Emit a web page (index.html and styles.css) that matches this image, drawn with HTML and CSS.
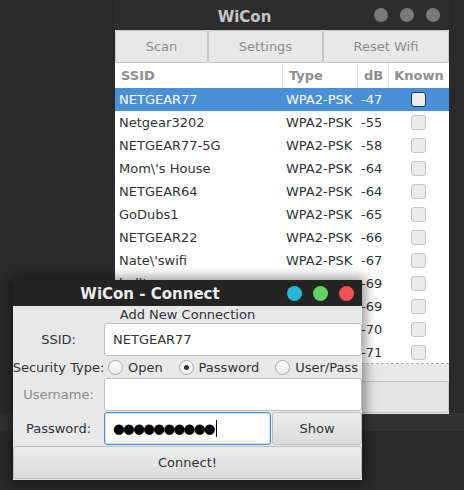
FILE: index.html
```html
<!DOCTYPE html>
<html>
<head>
<meta charset="utf-8">
<title>WiCon</title>
<link rel="stylesheet" href="styles.css">
</head>
<body>
<div class="win main">
  <div class="titlebar">
    <div class="title">WiCon</div>
    <div class="dots"><span></span><span></span><span></span></div>
  </div>
  <div class="toolbar">
    <div class="tb">Scan</div>
    <div class="tb">Settings</div>
    <div class="tb">Reset Wifi</div>
  </div>
  <div class="table">
    <div class="tr thead"><div>SSID</div><div>Type</div><div>dB</div><div class="known">Known</div></div>
    <div class="tr sel"><div>NETGEAR77</div><div>WPA2-PSK</div><div>-47</div><div class="known"><span class="cb"></span></div></div>
    <div class="tr"><div>Netgear3202</div><div>WPA2-PSK</div><div>-55</div><div class="known"><span class="cb"></span></div></div>
    <div class="tr"><div>NETGEAR77-5G</div><div>WPA2-PSK</div><div>-58</div><div class="known"><span class="cb"></span></div></div>
    <div class="tr"><div>Mom\'s House</div><div>WPA2-PSK</div><div>-64</div><div class="known"><span class="cb"></span></div></div>
    <div class="tr"><div>NETGEAR64</div><div>WPA2-PSK</div><div>-64</div><div class="known"><span class="cb"></span></div></div>
    <div class="tr"><div>GoDubs1</div><div>WPA2-PSK</div><div>-65</div><div class="known"><span class="cb"></span></div></div>
    <div class="tr"><div>NETGEAR22</div><div>WPA2-PSK</div><div>-66</div><div class="known"><span class="cb"></span></div></div>
    <div class="tr"><div>Nate\'swifi</div><div>WPA2-PSK</div><div>-67</div><div class="known"><span class="cb"></span></div></div>
    <div class="tr"><div>bellt</div><div></div><div>-69</div><div class="known"><span class="cb"></span></div></div>
    <div class="tr"><div></div><div></div><div>-69</div><div class="known"><span class="cb"></span></div></div>
    <div class="tr"><div></div><div></div><div>-70</div><div class="known"><span class="cb"></span></div></div>
    <div class="tr"><div></div><div></div><div>-71</div><div class="known"><span class="cb"></span></div></div>
  </div>
  <div class="foot"><div class="fbtn"></div></div>
</div>

<div class="win dlg">
  <div class="titlebar dtitlebar">
    <div class="title dtitle">WiCon - Connect</div>
    <div class="dots ddots"><span class="c1"></span><span class="c2"></span><span class="c3"></span></div>
  </div>
  <div class="form">
    <div class="caption">Add New Connection</div>
    <div class="lbl">SSID:</div>
    <div class="inp">NETGEAR77</div>
    <div class="lbl nowrap">Security Type:</div>
    <div class="radios">
      <div class="radio"><span class="rc"></span>Open</div>
      <div class="radio"><span class="rc on"></span>Password</div>
      <div class="radio"><span class="rc"></span>User/Pass</div>
    </div>
    <div class="lbl dis">Username:</div>
    <div class="inp"></div>
    <div class="lbl gap1">Password:</div>
    <div class="pw gap1">
      <div class="inp focus"><span class="mask">●●●●●●●●●●</span><span class="caret"></span></div>
      <div class="btn show">Show</div>
    </div>
    <div class="btn connect">Connect!</div>
  </div>
</div>
</body>
</html>
```

FILE: styles.css
```css
html, body {
  margin: 0;
  padding: 0;
}
body {
  width: 464px;
  height: 490px;
  overflow: hidden;
  position: relative;
  background: linear-gradient(#2a2a2a 0, #2a2a2a 413px, #323232 413px, #323232 431px, #2a2a2a 431px);
  font-family: "DejaVu Sans", sans-serif;
  font-size: 13px;
  color: #2e3436;
}
.win {
  position: absolute;
  display: flex;
  flex-direction: column;
  box-sizing: border-box;
}
.main {
  left: 115px;
  top: 0;
  width: 334px;
  height: 414px;
  background: #e8e8e8;
}
.titlebar {
  height: 30px;
  flex: none;
  display: flex;
  align-items: center;
  background: #2d2d2d;
  padding-right: 9px;
}
.title {
  flex: 1;
  text-align: center;
  font-weight: bold;
  font-size: 15px;
  color: #c6c6c6;
  padding-top: 3px;
}
.dots {
  display: flex;
  gap: 12px;
}
.dots span {
  width: 14px;
  height: 14px;
  border-radius: 50%;
  background: #797979;
}
.toolbar {
  display: grid;
  grid-template-columns: 93px 115px 1fr;
  height: 33px;
  flex: none;
}
.tb {
  border: 1px solid #c5c5c5;
  border-radius: 3px;
  background: #e8e8e8;
  color: #8c8c8c;
  display: flex;
  align-items: center;
  justify-content: center;
}
.table {
  height: 300px;
  flex: none;
  overflow: hidden;
  background: #fff;
  border-bottom: 1px dashed #b5b5b5;
}
.tr {
  display: grid;
  grid-template-columns: 167px 75px 31px 1fr;
  height: 23px;
  align-items: center;
}
.tr > div {
  padding-left: 4px;
  white-space: nowrap;
  overflow: hidden;
}
.thead {
  height: 25px;
  align-items: stretch;
  font-weight: bold;
  color: #8e8e8e;
}
.thead > div {
  display: flex;
  align-items: center;
  padding-left: 6px;
}
.thead > div + div {
  border-left: 1px solid #e4e4e4;
}
.tr > .known {
  padding-left: 0;
  display: flex;
  justify-content: center;
  align-items: center;
}
.thead > .known {
  padding-left: 0;
}
.sel {
  background: #4a90d9;
  color: #fff;
}
.cb {
  width: 15px;
  height: 15px;
  box-sizing: border-box;
  border: 1px solid #c4c4c4;
  border-radius: 3px;
  background: #ebebeb;
}
.sel .cb {
  border-color: #1f3450;
  background: #ededed;
}
.foot {
  flex: 1;
  padding-top: 17px;
}
.fbtn {
  height: 32px;
  box-sizing: border-box;
  border: 1px solid #c2c2c2;
  border-radius: 3px;
  background: #e6e6e6;
}

/* dialog */
.dlg {
  left: 13px;
  top: 280px;
  width: 349px;
  height: 200px;
  background: #e8e8e8;
  box-shadow: 0 1px 12px 3px rgba(0, 0, 0, 0.45);
}
.dtitlebar {
  height: 26px;
  background: #242424;
  padding-right: 8px;
}
.dtitle {
  color: #ececec;
  padding-top: 1px;
}
.ddots {
  gap: 11px;
}
.ddots span {
  width: 15px;
  height: 15px;
}
.ddots .c1 { background: #26b7d2; }
.ddots .c2 { background: #5fd364; }
.ddots .c3 { background: #f25252; }
.form {
  display: grid;
  grid-template-columns: 91px 1fr;
}
.caption {
  grid-column: 1 / -1;
  height: 17px;
  line-height: 17px;
  text-align: center;
}
.lbl {
  display: flex;
  align-items: center;
  justify-content: center;
  white-space: nowrap;
}
.dis {
  color: #8b8b8b;
}
.inp {
  height: 33px;
  box-sizing: border-box;
  background: #fff;
  border: 1px solid #bdbdbd;
  border-radius: 3px;
  padding-left: 8px;
  display: flex;
  align-items: center;
}
.radios {
  height: 22px;
  display: flex;
  justify-content: space-between;
  align-items: center;
  padding: 0 4px;
}
.radio {
  display: flex;
  align-items: center;
  gap: 5px;
}
.rc {
  width: 15px;
  height: 15px;
  box-sizing: border-box;
  border: 1px solid #a8a8a8;
  border-radius: 50%;
  background: linear-gradient(#ffffff, #ececec);
  display: flex;
  align-items: center;
  justify-content: center;
}
.rc.on::after {
  content: "";
  width: 5px;
  height: 5px;
  border-radius: 50%;
  background: #2e3436;
}
.gap1 {
  margin-top: 1px;
}
.pw {
  display: flex;
  gap: 1px;
}
.inp.focus {
  width: 167px;
  flex: none;
  border-color: #4a90d9;
  box-shadow: inset 0 0 0 1px rgba(74, 144, 217, 0.25);
}
.mask {
  font-size: 13.5px;
  color: #000;
  letter-spacing: -1.7px;
  line-height: 1;
}
.caret {
  width: 1px;
  height: 17px;
  background: #000;
  margin-left: 2px;
}
.btn {
  height: 33px;
  box-sizing: border-box;
  border: 1px solid #bcbcbc;
  border-radius: 3px;
  background: linear-gradient(#ececec, #dcdcdc);
  display: flex;
  align-items: center;
  justify-content: center;
}
.show {
  flex: 1;
}
.connect {
  grid-column: 1 / -1;
  margin-top: 1px;
}
```
